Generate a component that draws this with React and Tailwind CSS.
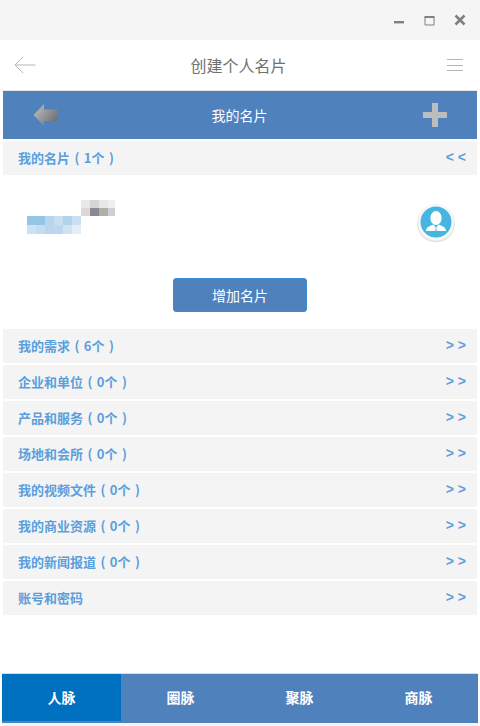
const font = { fontFamily: '"Noto Sans CJK SC", "Liberation Sans", sans-serif' };

const rows = [
  ["我的需求 ( 6个 )", ">>"],
  ["企业和单位 ( 0个 )", ">>"],
  ["产品和服务 ( 0个 )", ">>"],
  ["场地和会所 ( 0个 )", ">>"],
  ["我的视频文件 ( 0个 )", ">>"],
  ["我的商业资源 ( 0个 )", ">>"],
  ["我的新闻报道 ( 0个 )", ">>"],
  ["账号和密码", ">>"],
];

function Row({ label, mark, className = "" }) {
  return (
    <div className={`flex h-[34px] items-center justify-between rounded-[2px] bg-[#f4f4f4] pl-[15px] pr-[11px] ${className}`}>
      <span className="text-[13px] font-bold text-[#5b9fdc] [word-spacing:1.5px]">{label}</span>
      <span className="-mt-[2px] text-[14px] font-bold text-[#5b9fdc]" style={{ fontFamily: '"Liberation Sans", sans-serif' }}>{mark === ">>" ? "> >" : "< <"}</span>
    </div>
  );
}

function Mosaic() {
  const top = [["#ebe9e7", "#d6d5d6", "#e9e7e4", "#efefee"], ["#dbd9d5", "#8b8a90", "#b1afaa", "#cfd0d4"]];
  const bottom = [["#95c6e6", "#95c6e6", "#b7d6ec", "#c8dff0", "#b1d3ea", "#c8e0f1"], ["#cce2f2", "#c2dcf0", "#b8d6ed", "#bdd8ee", "#cfe3f3", "#e2eff8"]];
  return (
    <svg width="90" height="36" viewBox="0 0 90 36">
      {top.map((r, y) => r.map((c, x) => <rect key={`t${y}${x}`} x={54 + x * 9} y={y * 8} width={x === 3 ? 7 : 9} height="8" fill={c} shapeRendering="crispEdges" />))}
      {bottom.map((r, y) => r.map((c, x) => <rect key={`b${y}${x}`} x={x * 9} y={16 + y * 9} width="9" height="9" fill={c} shapeRendering="crispEdges" />))}
    </svg>
  );
}

function Avatar() {
  return (
    <svg width="40" height="40" viewBox="0 0 40 40">
      <circle cx="20" cy="20.5" r="19" fill="#e4e4e4" />
      <circle cx="20" cy="19.5" r="18" fill="#f8f8f8" />
      <circle cx="20" cy="19" r="15.5" fill="#46b6e0" />
      <ellipse cx="20" cy="15" rx="5.6" ry="7" fill="#fff" />
      <path d="M10 28 C10 24 14 23 17.5 21.5 L20 25 L22.5 21.5 C26 23 30 24 30 28 Z" fill="#fff" />
      <path d="M18.5 24.5 L20 26 L21.5 24.5 L21 28 H19 Z" fill="#46b6e0" opacity="0.5" />
    </svg>
  );
}

export default function App() {
  return (
    <div className="flex h-[726px] w-[480px] flex-col overflow-hidden bg-white" style={font}>
      <div className="flex h-[40px] shrink-0 items-center justify-end bg-[#f5f5f5] pr-[14px]">
        <div className="flex items-center gap-[19px]">
          <svg width="11" height="11" viewBox="0 0 11 11"><rect x="0" y="6" width="10" height="2.4" fill="#808080" /></svg>
          <svg width="11" height="11" viewBox="0 0 11 11"><path d="M1 2H10V10H1Z" fill="none" stroke="#808080" /><rect x="0.5" y="1" width="10" height="2" fill="#808080" /></svg>
          <svg width="12" height="12" viewBox="0 0 12 12"><path d="M1.5 1.5L10.5 10.5M10.5 1.5L1.5 10.5" stroke="#808080" strokeWidth="2.6" /></svg>
        </div>
      </div>

      <div className="flex h-[50px] shrink-0 items-center justify-between pl-[14px] pr-[16px]">
        <svg width="22" height="18" viewBox="0 0 22 18"><path d="M9 1L1 9L9 17M1 9H21.5" fill="none" stroke="#b5b5b5" strokeWidth="1" /></svg>
        <span className="mr-[5px] text-[16px] text-[#707070]">创建个人名片</span>
        <svg width="18" height="14" viewBox="0 0 18 14"><path d="M1 1.5H17M1 7.5H17M1 12.5H17" stroke="#b5b5b5" strokeWidth="1" /></svg>
      </div>

      <div className="flex min-h-0 flex-1 flex-col px-[2px]">
        <div className="flex flex-1 flex-col border-t border-[#e8e8e8]">
          <div className="mx-px flex h-[48px] shrink-0 items-center justify-between bg-[#4f81bd] pl-[30px] pr-[30px]">
            <svg width="25" height="24" viewBox="0 0 25 24">
              <defs>
                <linearGradient id="ag" x1="0" y1="0" x2="1" y2="0.7">
                  <stop offset="0" stopColor="#c4c4c4" />
                  <stop offset="1" stopColor="#6f7178" />
                </linearGradient>
              </defs>
              <path d="M0.5 12L11 1V6.5H24V18H11V23Z" fill="url(#ag)" />
            </svg>
            <span className="mr-[2px] text-[14px] text-white">我的名片</span>
            <svg width="24" height="24" viewBox="0 0 24 24"><path d="M9 0H15V9H24V15H15V24H9V15H0V9H9Z" fill="#bdbdbd" /></svg>
          </div>
          <div className="mx-px mt-[2px]">
            <Row label="我的名片 ( 1个 )" mark="<<" />
          </div>
          <div className="flex h-[154px] shrink-0 flex-col">
            <div className="flex items-start justify-between pl-[25px] pr-[22px] pt-[25px]">
              <Mosaic />
              <div className="mt-[3px]"><Avatar /></div>
            </div>
            <div className="mt-[35px] flex justify-center">
              <button className="h-[34px] w-[134px] rounded-[3px] border border-[#3c8dd0] bg-[#4f81bd] text-[14px] text-white">增加名片</button>
            </div>
          </div>
          <div className="mx-px flex flex-col gap-[2px]">
            {rows.map(([l, m]) => <Row key={l} label={l} mark={m} />)}
          </div>
          <div className="flex-1" />
          <div className="h-[50px] shrink-0 border-t-[1px] border-[#dcdcdc] bg-white">
            <div className="flex h-[49px] bg-[#4f81bd]">
              <div className="flex h-[47px] w-[119px] items-center justify-center bg-[#0070c0] text-[14px] font-bold text-white">人脉</div>
              {["圈脉", "聚脉", "商脉"].map((t) => (
                <div key={t} className="flex h-[47px] w-[119px] items-center justify-center text-[14px] font-bold text-white">{t}</div>
              ))}
            </div>
          </div>
          <div className="h-[3px] shrink-0 bg-[#f4f4f4]" />
        </div>
      </div>
    </div>
  );
}
